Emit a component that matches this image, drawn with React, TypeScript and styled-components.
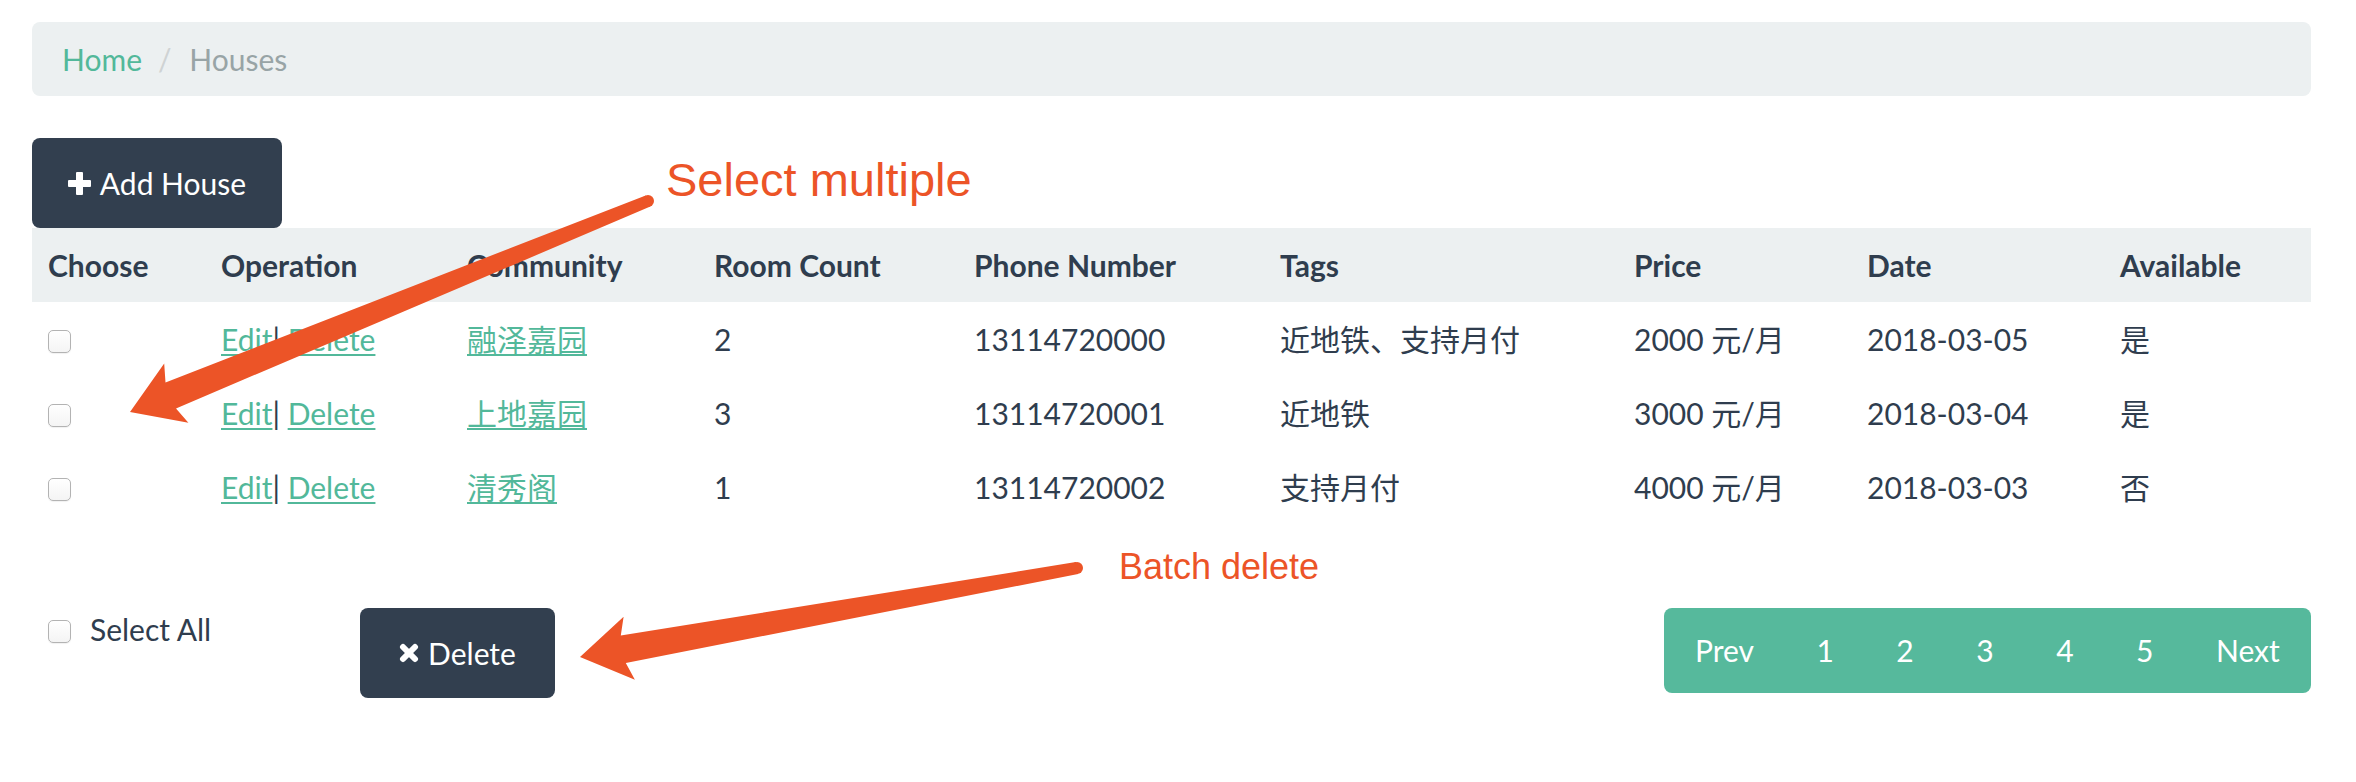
import React from 'react';
import styled, { createGlobalStyle } from 'styled-components';

const GlobalStyle = createGlobalStyle`
  html, body { margin: 0; padding: 0; background: #ffffff; }
  body {
    font-family: Lato, "Noto Sans CJK SC", sans-serif;
    color: #2f3d4e;
    font-size: 30px;
    line-height: 1.42857;
  }
`;

const Page = styled.div`
  position: relative;
  width: 2356px;
  height: 782px;
  box-sizing: border-box;
  padding: 22px 45px 0 32px;
  overflow: hidden;
`;

const Breadcrumb = styled.ol`
  display: flex;
  align-items: center;
  list-style: none;
  margin: 0 0 42px;
  padding: 0 30px;
  height: 74px;
  background: #ecf0f1;
  border-radius: 8px;
`;

const Crumb = styled.li<{ $active?: boolean }>`
  display: flex;
  align-items: center;
  color: ${(p) => (p.$active ? '#98a4a6' : '#52b89a')};
`;

const CrumbSep = styled.span`
  color: #cfd3d4;
  padding: 0 10px;
  margin-left: 6px;
`;

const DarkButton = styled.button<{ $w: number }>`
  display: inline-flex;
  align-items: center;
  justify-content: center;
  gap: 9px;
  width: ${(p) => p.$w}px;
  height: 90px;
  padding: 0;
  border: none;
  border-radius: 8px;
  background: #323f4f;
  color: #ffffff;
  font-family: Lato, sans-serif;
  font-size: 30px;
  cursor: pointer;
`;

const Table = styled.table`
  width: 100%;
  border-collapse: collapse;
  table-layout: fixed;
`;

const Col = styled.col<{ $w: number }>`
  width: ${(p) => p.$w}px;
`;

const HeadRow = styled.tr`
  background: #ecf0f1;
`;

const Th = styled.th`
  height: 74px;
  padding: 0 16px;
  text-align: left;
  font-weight: 700;
  vertical-align: middle;
  white-space: nowrap;
  color: #2f3d4e;
`;

const Td = styled.td`
  height: 74px;
  padding: 0 16px;
  vertical-align: middle;
  white-space: nowrap;
`;

const Link = styled.a`
  color: #52b89a;
  text-decoration: underline;
  text-decoration-thickness: 2px;
  text-underline-offset: 3px;
  cursor: pointer;
`;

const Bar = styled.span`
  color: #2f3d4e;
`;

const Check = styled.span<{ $block?: boolean }>`
  display: block;
  width: 23px;
  height: 23px;
  box-sizing: border-box;
  border: 1.5px solid #b3b3b3;
  border-radius: 5px;
  background: linear-gradient(#ffffff, #f4f4f4);
  box-shadow: 0 1px 1px rgba(0, 0, 0, 0.06);
  margin-top: ${(p) => (p.$block ? '5px' : '3px')};
  flex: none;
`;

const Footer = styled.div`
  display: flex;
  align-items: flex-start;
  margin-top: 84px;
`;

const SelectAll = styled.label`
  display: flex;
  align-items: center;
  gap: 19px;
  width: 328px;
  height: 43px;
  box-sizing: border-box;
  padding-left: 16px;
`;

const Pager = styled.ul`
  display: flex;
  list-style: none;
  margin: 0 0 0 auto;
  padding: 0;
  border-radius: 8px;
  overflow: hidden;
`;

const PageLink = styled.a`
  display: flex;
  align-items: center;
  height: 85px;
  padding: 0 31.25px;
  background: #56b99c;
  color: #ffffff;
  text-decoration: none;
  cursor: pointer;
`;

const Overlay = styled.svg`
  position: absolute;
  left: 0;
  top: 0;
  pointer-events: none;
`;

const Note = styled.span<{ $x: number; $y: number; $size: number }>`
  position: absolute;
  left: ${(p) => p.$x}px;
  top: ${(p) => p.$y}px;
  font-family: "Liberation Sans", Arial, sans-serif;
  font-size: ${(p) => p.$size}px;
  line-height: 1;
  color: #ec5427;
  white-space: nowrap;
`;

const PlusIcon = () => (
  <svg width="23" height="23" viewBox="0 0 23 23">
    <rect x="8" y="0" width="7" height="23" rx="1" fill="#fff" />
    <rect x="0" y="8" width="23" height="7" rx="1" fill="#fff" />
  </svg>
);

const RemoveIcon = () => (
  <svg width="20" height="20" viewBox="0 0 20 20">
    <g stroke="#fff" strokeWidth="6" strokeLinecap="round">
      <line x1="4" y1="4" x2="16" y2="16" />
      <line x1="16" y1="4" x2="4" y2="16" />
    </g>
  </svg>
);

type Pt = [number, number];

function arrowPath(tail: Pt, tip: Pt, w0 = 12, w1 = 28, L = 50, W = 32, notch = 44) {
  const dx = tip[0] - tail[0];
  const dy = tip[1] - tail[1];
  const len = Math.hypot(dx, dy);
  const ux = dx / len;
  const uy = dy / len;
  const nx = -uy;
  const ny = ux;
  const B: Pt = [tip[0] - ux * L, tip[1] - uy * L];
  const N: Pt = [tip[0] - ux * notch, tip[1] - uy * notch];
  const pts: Pt[] = [
    [tail[0] + (nx * w0) / 2, tail[1] + (ny * w0) / 2],
    [N[0] + (nx * w1) / 2, N[1] + (ny * w1) / 2],
    [B[0] + nx * W, B[1] + ny * W],
    tip,
    [B[0] - nx * W, B[1] - ny * W],
    [N[0] - (nx * w1) / 2, N[1] - (ny * w1) / 2],
    [tail[0] - (nx * w0) / 2, tail[1] - (ny * w0) / 2],
  ];
  return 'M' + pts.map((p) => `${p[0].toFixed(1)} ${p[1].toFixed(1)}`).join(' L') + ' Z';
}

const columns = [
  { title: 'Choose', w: 173 },
  { title: 'Operation', w: 246 },
  { title: 'Community', w: 247 },
  { title: 'Room Count', w: 260 },
  { title: 'Phone Number', w: 306 },
  { title: 'Tags', w: 354 },
  { title: 'Price', w: 233 },
  { title: 'Date', w: 253 },
  { title: 'Available', w: 207 },
];

const houses = [
  { community: '融泽嘉园', rooms: 2, phone: '13114720000', tags: '近地铁、支持月付', price: '2000 元/月', date: '2018-03-05', available: '是' },
  { community: '上地嘉园', rooms: 3, phone: '13114720001', tags: '近地铁', price: '3000 元/月', date: '2018-03-04', available: '是' },
  { community: '清秀阁', rooms: 1, phone: '13114720002', tags: '支持月付', price: '4000 元/月', date: '2018-03-03', available: '否' },
];

const pages = ['Prev', '1', '2', '3', '4', '5', 'Next'];

export default function App() {
  const tail1: Pt = [648, 201];
  const tip1: Pt = [130, 412];
  const tail2: Pt = [1077, 568];
  const tip2: Pt = [580, 657];
  return (
    <>
      <GlobalStyle />
      <Page>
        <Breadcrumb>
          <Crumb>Home</Crumb>
          <Crumb $active>
            <CrumbSep>/&nbsp;</CrumbSep>Houses
          </Crumb>
        </Breadcrumb>

        <DarkButton $w={250}>
          <PlusIcon />
          Add House
        </DarkButton>

        <Table>
          <colgroup>
            {columns.map((c) => (
              <Col key={c.title} $w={c.w} />
            ))}
          </colgroup>
          <thead>
            <HeadRow>
              {columns.map((c) => (
                <Th key={c.title}>{c.title}</Th>
              ))}
            </HeadRow>
          </thead>
          <tbody>
            {houses.map((h) => (
              <tr key={h.phone}>
                <Td>
                  <Check $block />
                </Td>
                <Td>
                  <Link>Edit</Link>
                  <Bar>| </Bar>
                  <Link>Delete</Link>
                </Td>
                <Td>
                  <Link>{h.community}</Link>
                </Td>
                <Td>{h.rooms}</Td>
                <Td>{h.phone}</Td>
                <Td>{h.tags}</Td>
                <Td>{h.price}</Td>
                <Td>{h.date}</Td>
                <Td>{h.available}</Td>
              </tr>
            ))}
          </tbody>
        </Table>

        <Footer>
          <SelectAll>
            <Check />
            Select All
          </SelectAll>
          <DarkButton $w={195}>
            <RemoveIcon />
            Delete
          </DarkButton>
          <Pager>
            {pages.map((p) => (
              <li key={p}>
                <PageLink>{p}</PageLink>
              </li>
            ))}
          </Pager>
        </Footer>

        <Overlay width="2356" height="782" viewBox="0 0 2356 782">
          <path d={arrowPath(tail1, tip1)} fill="#ec5427" />
          <circle cx={tail1[0]} cy={tail1[1]} r={6} fill="#ec5427" />
          <path d={arrowPath(tail2, tip2)} fill="#ec5427" />
          <circle cx={tail2[0]} cy={tail2[1]} r={6} fill="#ec5427" />
        </Overlay>
        <Note $x={666} $y={156} $size={47}>
          Select multiple
        </Note>
        <Note $x={1119} $y={549} $size={36}>
          Batch delete
        </Note>
      </Page>
    </>
  );
}
